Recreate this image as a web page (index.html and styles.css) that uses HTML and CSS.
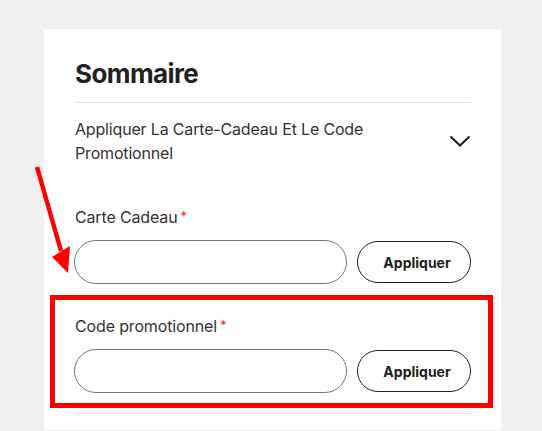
FILE: index.html
```html
<!DOCTYPE html>
<html lang="fr">
<head>
<meta charset="utf-8">
<title>Sommaire</title>
<link rel="stylesheet" href="styles.css">
</head>
<body>
<div class="page">
  <section class="card">
    <h2 class="title">Sommaire</h2>
    <div class="accordion">
      <span class="accordion-text">Appliquer La Carte-Cadeau Et Le Code Promotionnel</span>
      <svg class="chevron" width="22" height="13" viewBox="0 0 22 13"><polyline points="1.5,1.5 11,10.5 20.5,1.5" fill="none" stroke="#222" stroke-width="2.2"/></svg>
    </div>
    <div class="field field-gift">
      <label class="label">Carte Cadeau<span class="req">*</span></label>
      <div class="row">
        <input class="input" type="text">
        <button class="btn">Appliquer</button>
      </div>
    </div>
    <div class="field field-promo">
      <label class="label">Code promotionnel<span class="req">*</span></label>
      <div class="row">
        <input class="input" type="text">
        <button class="btn">Appliquer</button>
      </div>
    </div>
    <div class="sep-bottom"></div>
  </section>
  <div class="highlight"></div>
  <svg class="arrow" width="80" height="120" viewBox="0 0 80 120">
    <line x1="12" y1="7" x2="36" y2="91" stroke="#ff0000" stroke-width="4.5"/>
    <polygon points="27,97 45,86 43,113" fill="#ff0000"/>
  </svg>
</div>
</body>
</html>
```
FILE: styles.css
```css
html, body {
  margin: 0;
  padding: 0;
  background: #f0f0f0;
  height: 100%;
  overflow: hidden;
}
.page {
  position: relative;
  padding: 29px 41px 0 44px;
  font-family: "Inter", "Liberation Sans", sans-serif;
  color: #333;
}
.card {
  width: 396px;
  background: #fff;
  padding: 29px 30px 16px 31px;
}
.title {
  margin: 0;
  font-size: 26px;
  line-height: 32px;
  font-weight: 700;
  color: #222;
  letter-spacing: -0.6px;
  padding-bottom: 12px;
  border-bottom: 1px solid #e3e3e3;
}
.accordion {
  display: flex;
  align-items: center;
  justify-content: space-between;
  padding-top: 14px;
}
.accordion-text {
  width: 300px;
  font-size: 16px;
  line-height: 24px;
  letter-spacing: -0.17px;
  color: #333;
}
.chevron {
  display: block;
}
.field {
  display: flex;
  flex-direction: column;
}
.field-gift {
  margin-top: 40px;
}
.field-promo {
  margin-top: 30px;
}
.label {
  font-size: 16px;
  line-height: 24px;
  letter-spacing: -0.15px;
  color: #333;
  margin-bottom: 11px;
}
.req {
  color: #e0343c;
  font-size: 13px;
  vertical-align: 2px;
  line-height: 0;
  margin-left: 3px;
}
.row {
  display: flex;
  align-items: center;
  gap: 10px;
  margin-left: -1px;
}
.input {
  flex: 1;
  min-width: 0;
  height: 44px;
  box-sizing: border-box;
  border: 1px solid #777;
  border-radius: 22px;
  background: #fff;
  margin: 0;
  padding: 0 16px;
  font: inherit;
}
.btn {
  width: 114px;
  height: 42px;
  box-sizing: border-box;
  border: 1px solid #222;
  border-radius: 21px;
  background: #fff;
  margin: 0;
  padding: 0 0 0 6px;
  font-family: inherit;
  font-size: 14px;
  font-weight: 700;
  color: #222;
  cursor: pointer;
}
.sep-bottom {
  margin-top: 20px;
  border-top: 1px solid #e3e3e3;
}
.highlight {
  position: absolute;
  left: 50px;
  top: 295px;
  width: 433px;
  height: 103px;
  border: 5px solid #ff0000;
}
.arrow {
  position: absolute;
  left: 25px;
  top: 160px;
}
```
